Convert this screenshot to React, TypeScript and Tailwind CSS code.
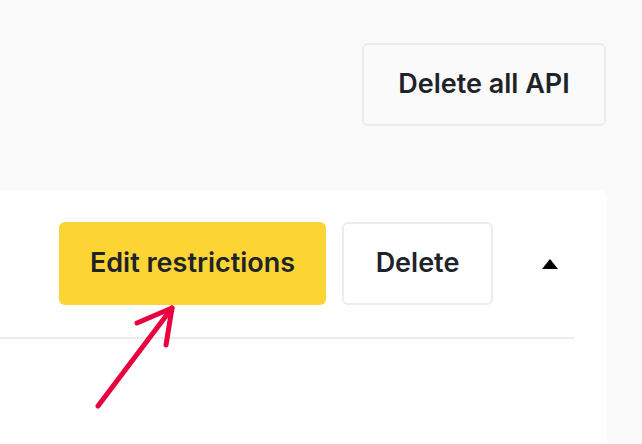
export default function App() {
  return (
    <main className="w-[642px] h-[444px] overflow-hidden bg-[#fafafa] font-['Inter',sans-serif] text-[#1e2329]">
      <div className="flex justify-end pt-[43px] pr-[36px]">
        <button className="h-[83px] w-[244px] rounded-md border-2 border-[#eaecef] bg-[#fafafa] text-[27px] font-semibold">
          Delete all API
        </button>
      </div>
      <section className="relative mt-[64px] ml-[-20px] w-[627px] h-[300px] rounded-lg bg-white pr-[33px]">
        <div className="flex items-center justify-end pt-[32px]">
          <button className="h-[83px] w-[267px] rounded-md bg-[#fcd535] text-[27px] font-semibold">
            Edit restrictions
          </button>
          <button className="ml-[16px] h-[83px] w-[151px] rounded-md border-2 border-[#eaecef] bg-white text-[27px] font-semibold">
            Delete
          </button>
          <div className="flex w-[81px] items-center justify-center pl-[32px]">
            <svg width="18" height="12" viewBox="0 0 18 12">
              <path d="M9 1 L17 11 L1 11 Z" fill="#000" />
            </svg>
          </div>
        </div>
        <div className="mt-[32px] h-[2px] bg-[#eaecef]" />
        <svg className="absolute left-[20px] top-0" width="200" height="300" viewBox="0 0 200 300">
          <g stroke="#e8003f" strokeWidth="5" strokeLinecap="round" strokeLinejoin="round" fill="none">
            <path d="M98 216 L172 118" />
            <path d="M137 133 L172 118 L166 155" />
          </g>
        </svg>
      </section>
    </main>
  );
}
